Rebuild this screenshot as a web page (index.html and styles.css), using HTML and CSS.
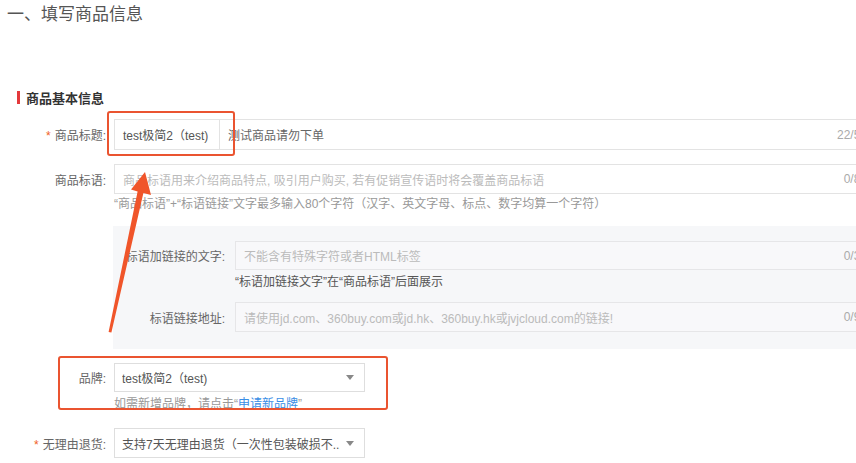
FILE: index.html
```html
<!DOCTYPE html>
<html lang="zh-CN">
<head>
<meta charset="utf-8">
<title>填写商品信息</title>
<link rel="stylesheet" href="styles.css">
</head>
<body>
<div class="page">
  <h1 class="title">一、填写商品信息</h1>
  <div class="section-title">商品基本信息</div>

  <div class="form">
    <div class="row row-1">
      <div class="label req">商品标题:</div>
      <div class="input combo">
        <span class="prefix">test极简2（test)</span>
        <span class="value">测试商品请勿下单</span>
        <span class="count">22/50</span>
      </div>
    </div>

    <div class="row row-2">
      <div class="label">商品标语:</div>
      <div class="input">
        <span class="placeholder">商品标语用来介绍商品特点, 吸引用户购买, 若有促销宣传语时将会覆盖商品标语</span>
        <span class="count">0/80</span>
      </div>
    </div>
    <div class="help help-2">“商品标语”+“标语链接”文字最多输入80个字符（汉字、英文字母、标点、数字均算一个字符）</div>

    <div class="panel">
      <div class="prow">
        <div class="plabel">标语加链接的文字:</div>
        <div class="input pinput">
          <span class="placeholder">不能含有特殊字符或者HTML标签</span>
          <span class="count">0/30</span>
        </div>
      </div>
      <div class="phelp">“标语加链接文字”在“商品标语”后面展示</div>
      <div class="prow prow-2">
        <div class="plabel">标语链接地址:</div>
        <div class="input pinput">
          <span class="placeholder">请使用jd.com、360buy.com或jd.hk、360buy.hk或jvjcloud.com的链接!</span>
          <span class="count">0/95</span>
        </div>
      </div>
    </div>

    <div class="row row-brand">
      <div class="label">品牌:</div>
      <div class="select">
        <span class="sval">test极简2（test)</span>
        <span class="caret"></span>
      </div>
    </div>
    <div class="help help-brand">如需新增品牌，请点击“<span class="link">申请新品牌</span>”</div>

    <div class="row row-refund">
      <div class="label req">无理由退货:</div>
      <div class="select">
        <span class="sval">支持7天无理由退货（一次性包装破损不...</span>
        <span class="caret"></span>
      </div>
    </div>
  </div>

  <div class="mark mark-1"></div>
  <div class="mark mark-2"></div>
  <svg class="arrow" width="856" height="463" viewBox="0 0 856 463">
    <polygon points="108.6,332 111.4,332.4 143.4,193 151,195 145,172 131,189.5 137.6,191.6" fill="#f0552a"/>
  </svg>
</div>
</body>
</html>
```

FILE: styles.css
```css
html, body {
  margin: 0;
  padding: 0;
  overflow: hidden;
  background: #fff;
}
body {
  width: 856px;
  height: 463px;
  font-family: "Liberation Sans", "Noto Sans CJK SC", sans-serif;
  font-size: 12px;
  color: #333;
}
.page {
  position: relative;
  width: 856px;
  height: 463px;
}
.title {
  margin: 0;
  padding: 4px 0 0 7px;
  font-size: 17px;
  line-height: 22px;
  font-weight: normal;
  color: #555;
}
.section-title {
  margin-top: 63px;
  padding-left: 17px;
  display: flex;
  align-items: center;
  height: 16px;
  font-size: 13px;
  font-weight: bold;
  color: #333;
}
.section-title::before {
  content: "";
  width: 3px;
  height: 13px;
  background: #e4393c;
  margin-right: 6px;
}
.form {
  width: 900px;
}
.row {
  display: flex;
  align-items: center;
}
.label {
  width: 106px;
  text-align: right;
  color: #666;
  flex: none;
  margin-right: 8px;
}
.label.req::before {
  content: "*";
  color: #f0601e;
  margin-right: 4px;
}
.input {
  width: 764px;
  box-sizing: border-box;
  border: 1px solid #e3e3e3;
  background: #fff;
  display: flex;
  align-items: center;
  padding: 0 10px 0 8px;
  flex: none;
}
.row-1 { margin-top: 14px; }
.row-1 .input { height: 31px; padding-left: 0; }
.prefix {
  width: 105px;
  box-sizing: border-box;
  height: 100%;
  display: flex;
  align-items: center;
  padding-left: 8px;
  border-right: 1px solid #e3e3e3;
  color: #555;
}
.value {
  padding-left: 8px;
  color: #666;
  flex: 1;
}
.placeholder {
  color: #bbb;
  flex: 1;
  white-space: nowrap;
}
.count {
  color: #aaa;
  margin-left: auto;
}
.row-2 { margin-top: 14px; }
.row-2 .input { height: 30px; }
.help {
  margin-left: 114px;
  line-height: 16px;
  color: #999;
  white-space: nowrap;
}
.help-2 { margin-top: 2px; }
.panel {
  margin: 14px 0 0 113px;
  width: 790px;
  background: #f6f7f9;
  padding: 15px 0 17px;
}
.prow {
  display: flex;
  align-items: center;
}
.plabel {
  width: 112px;
  text-align: right;
  margin-right: 10px;
  color: #666;
  flex: none;
}
.pinput {
  width: 643px;
  height: 29px;
  background: #f8f8fa;
  border-color: #e6e6e8;
}
.prow-2 { margin-top: 12px; }
.prow-2 .pinput { height: 30px; }
.phelp {
  margin: 4px 0 0 122px;
  line-height: 16px;
  color: #555;
}
.select {
  width: 251px;
  box-sizing: border-box;
  border: 1px solid #dedede;
  background: #fff;
  display: flex;
  align-items: center;
  padding: 0 10px 0 7px;
  flex: none;
}
.sval {
  flex: 1;
  color: #555;
  white-space: nowrap;
  overflow: hidden;
}
.caret {
  width: 0;
  height: 0;
  border-left: 4px solid transparent;
  border-right: 4px solid transparent;
  border-top: 5px solid #888;
  margin-left: 6px;
}
.row-brand { margin-top: 14px; }
.row-brand .select { height: 29px; }
.help-brand { margin-top: 4px; color: #999; }
.link { color: #3a8ee6; }
.row-refund { margin-top: 16px; }
.row-refund .select { height: 30px; }

.mark {
  position: absolute;
  border: 2px solid #ea5430;
  border-radius: 3px;
  box-sizing: border-box;
}
.mark-1 { left: 107px; top: 111px; width: 128px; height: 45px; }
.mark-2 { left: 58px; top: 356px; width: 330px; height: 54px; }
.arrow {
  position: absolute;
  left: 0;
  top: 0;
  pointer-events: none;
}
```
